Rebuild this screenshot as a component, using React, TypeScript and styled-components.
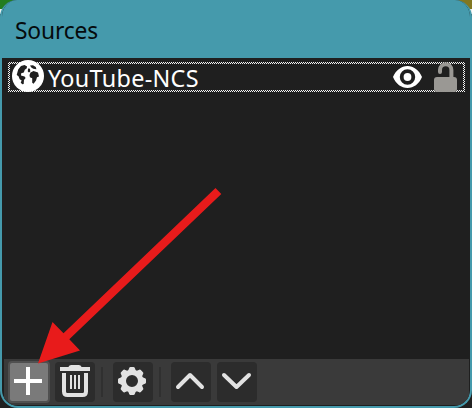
import React from "react";
import styled, { createGlobalStyle } from "styled-components";

const GlobalStyle = createGlobalStyle`
  * { box-sizing: border-box; }
  body { margin: 0; overflow: hidden; }
`;

const Desktop = styled.main`
  position: relative;
  width: 472px;
  height: 408px;
  overflow: hidden;
  background:
    linear-gradient(#237d20, #237d20) 0 0 / 30px 9px no-repeat,
    linear-gradient(#817721, #817721) 100% 0 / 30px 9px no-repeat,
    linear-gradient(#e9eeee, #e9eeee) 0 9px / 100% 5px no-repeat,
    #202020;
  font-family: "Noto Sans", "Open Sans", sans-serif;
`;

const Dock = styled.section`
  display: flex;
  flex-direction: column;
  width: 472px;
  height: 408px;
  border: 2px solid #459aac;
  border-top: 0;
  border-radius: 17px 17px 18px 18px;
  overflow: hidden;
  background: #1f1f1f;
`;

const TitleBar = styled.header`
  flex: 0 0 58px;
  padding: 15px 0 0 13px;
  background: #459aac;
  color: #050b0d;
  font-size: 22.8px;
  line-height: 32px;
  letter-spacing: -0.15px;
`;

const SourceList = styled.div`
  flex: 1;
  padding: 4px 5px 0 6px;
`;

const SourceRow = styled.div`
  display: flex;
  align-items: center;
  height: 30px;
  padding: 2px;
  background: repeating-conic-gradient(#f4f4f4 0 25%, #1f1f1f 0 50%) 0 0 / 2px 2px;
`;

const RowContent = styled.div`
  display: flex;
  align-items: center;
  width: 100%;
  height: 26px;
  padding: 0 6px 0 2px;
  background: #1f1f1f;
`;

const SourceName = styled.span`
  flex: 1;
  margin-left: 4px;
  padding-top: 1px;
  color: #fff;
  font-size: 23.4px;
  line-height: 26px;
  letter-spacing: 0.3px;
  white-space: nowrap;
`;

const Glyph = styled.svg<{ $gap?: number }>`
  display: block;
  flex: none;
  margin-left: ${({ $gap = 0 }) => $gap}px;
  overflow: visible;
`;

const Toolbar = styled.footer`
  display: flex;
  align-items: center;
  flex: 0 0 46px;
  margin: 0 1px 1px 2px;
  padding: 0 4px;
  background: #3a3a3a;
`;

const ToolButton = styled.button<{ $active?: boolean; $gap?: number; $shift?: number }>`
  display: grid;
  place-items: center;
  width: ${({ $active }) => ($active ? 42 : 40)}px;
  height: ${({ $active }) => ($active ? 42 : 40)}px;
  margin-left: ${({ $gap = 0 }) => $gap}px;
  padding: 0 ${({ $shift = 0 }) => $shift}px 2px 0;
  border: ${({ $active }) => ($active ? "2px solid #505050" : "0")};
  border-radius: 4px;
  background: ${({ $active }) => ($active ? "#7a7a7a" : "#2c2c2c")};
`;

const Separator = styled.i<{ $gap: number }>`
  width: 2px;
  height: 30px;
  margin-left: ${({ $gap }) => $gap}px;
  background: #303030;
`;

const Pointer = styled.svg`
  position: absolute;
  inset: 0;
  pointer-events: none;
`;

const GEAR_ANGLES = [0, 45, 90, 135, 180, 225, 270, 315];

export default function App() {
  return (
    <Desktop>
      <GlobalStyle />
      <Dock>
        <TitleBar>Sources</TitleBar>
        <SourceList>
          <SourceRow>
            <RowContent>
              <Glyph width="32" height="32" viewBox="0 0 32 32">
                <circle cx="16" cy="15" r="16" fill="#fff" />
                <path
                  fill="#1f1f1f"
                  d="M12.5 4 9 5 6.2 8.5 4.7 14l1.8 1.3 1.2 3 2 1.2-1 2 1.5 1.8 1.5-.2.3-4.2 1.6-2-1-1.4-3.6-1 .2-2.2 2.6-.8 1-2.8 1.8-1.2.5-2zM16 7.6l2 .1.3 2.8-1.3 1-1.2-1.1zM18 4.6l3-.3 2.8 1.7.6 2.2-3.1-.4-2-1.4zM18.5 11.5l3-1.6 4.5 1.7 1 4-2 .6-1 3.4-2.4 3.2-1.4-1v-4.5l-2.3-1-.4-2.4z"
                />
              </Glyph>
              <SourceName>YouTube-NCS</SourceName>
              <Glyph width="29" height="24" viewBox="0 0 29 24">
                <path
                  fill="#fff"
                  fillRule="evenodd"
                  d="M0 12C3 5 8.3 1 14.5 1S26 5 29 12c-3 7-8.3 11-14.5 11S3 19 0 12Zm14.5-7.7a7.7 7.7 0 1 0 0 15.4 7.7 7.7 0 0 0 0-15.4Z"
                />
                <circle cx="14.5" cy="12" r="3.9" fill="#fff" />
              </Glyph>
              <Glyph $gap={12} width="23" height="30" viewBox="0 0 23 30">
                <path
                  d="M6 10V8a5.7 5.7 0 0 1 11.4 0V17"
                  fill="none"
                  stroke="#9a9894"
                  strokeWidth="4"
                  strokeLinecap="round"
                />
                <rect y="15" width="23" height="15" rx="3" fill="#9a9894" />
              </Glyph>
            </RowContent>
          </SourceRow>
        </SourceList>
        <Toolbar>
          <ToolButton $active $shift={2} aria-label="Add source">
            <Glyph width="28" height="28" viewBox="0 0 28 28">
              <path d="M14 0v28M0 14h28" stroke="#fff" strokeWidth="4" />
            </Glyph>
          </ToolButton>
          <ToolButton $gap={5} aria-label="Remove source">
            <Glyph width="30" height="32" viewBox="0 0 30 32">
              <g fill="none" stroke="#e2e2e2">
                <path d="M0 4h30" strokeWidth="4" />
                <path d="M10 2.5Q10 1.5 11.5 1.5h7Q20 1.5 20 2.5" strokeWidth="3" />
                <path d="M4 8v18.5Q4 30 7.5 30h15Q26 30 26 26.5V8" strokeWidth="4" />
                <path d="M11 10v14M15 10v14M19 10v14" strokeWidth="2" />
              </g>
            </Glyph>
          </ToolButton>
          <Separator $gap={6} />
          <ToolButton $gap={10} $shift={2} aria-label="Source properties">
            <Glyph width="28" height="28" viewBox="-14 -14 28 28">
              <circle r="8.6" fill="none" stroke="#e2e2e2" strokeWidth="5.2" />
              {GEAR_ANGLES.map((angle) => (
                <path
                  key={angle}
                  transform={`rotate(${angle})`}
                  d="M-4-10-2.8-13Q-2.5-14-1.5-14h3Q2.5-14 2.8-13L4-10z"
                  fill="#e2e2e2"
                />
              ))}
            </Glyph>
          </ToolButton>
          <Separator $gap={6} />
          <ToolButton $gap={10} $shift={2} aria-label="Move up">
            <Glyph width="28" height="16" viewBox="0 0 28 16">
              <path d="m2 14 12-12 12 12" fill="none" stroke="#e2e2e2" strokeWidth="4" strokeLinecap="round" strokeLinejoin="round" />
            </Glyph>
          </ToolButton>
          <ToolButton $gap={6} $shift={1} aria-label="Move down">
            <Glyph width="29" height="16" viewBox="0 0 29 16">
              <path d="m2 2 12.5 12L27 2" fill="none" stroke="#e2e2e2" strokeWidth="4" strokeLinecap="round" strokeLinejoin="round" />
            </Glyph>
          </ToolButton>
        </Toolbar>
      </Dock>
      <Pointer width="472" height="408" viewBox="0 0 472 408" aria-hidden="true">
        <path d="M38 363.5 52.5 322l11 11.3L215.5 188l5.8 6L69.3 339.3 80 350.5z" fill="#e81b1b" />
      </Pointer>
    </Desktop>
  );
}
